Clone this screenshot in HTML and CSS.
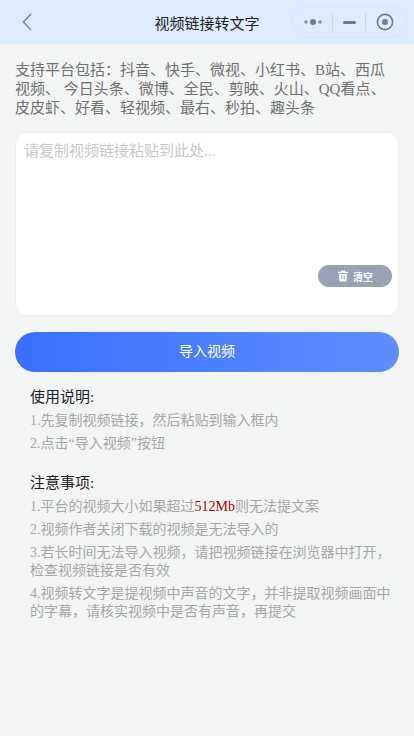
FILE: index.html
```html
<!DOCTYPE html>
<html lang="zh">
<head>
  <meta charset="UTF-8" />
  <meta name="viewport" content="width=device-width, initial-scale=1.0" />
  <title>视频链接转文字</title>
  <link rel="stylesheet" href="styles.css">
</head>
<body>
  <div class="header">
    <svg class="back-icon" width="12" height="18" viewBox="0 0 12 18">
      <path d="M10 1 L2.5 9 L10 17" fill="none" stroke="#7c8794" stroke-width="1.6" />
    </svg>
    <div class="header-title">视频链接转文字</div>
    <div class="capsule">
      <svg width="18" height="8" viewBox="0 0 18 8">
        <circle cx="2" cy="4" r="1.8" fill="#8d929b" />
        <circle cx="9" cy="4" r="3" fill="#767b85" />
        <circle cx="16" cy="4" r="1.8" fill="#8d929b" />
      </svg>
      <span class="capsule-line"></span>
      <span class="capsule-dash"></span>
      <span class="capsule-line"></span>
      <svg width="18" height="18" viewBox="0 0 18 18">
        <circle cx="9" cy="9" r="7.6" fill="none" stroke="#767b85" stroke-width="1.6" />
        <circle cx="9" cy="9" r="3" fill="#767b85" />
      </svg>
    </div>
  </div>

  <p class="platforms">支持平台包括：抖音、快手、微视、小红书、B站、西瓜视频、 今日头条、微博、全民、剪映、火山、QQ看点、皮皮虾、好看、轻视频、最右、秒拍、趣头条</p>

  <div class="input-card">
    <div class="placeholder">请复制视频链接粘贴到此处...</div>
    <div class="clear-btn">
      <svg width="12" height="12" viewBox="0 0 12 12">
        <path d="M4.3 0.6 H7.7 L8.2 1.8 H11 V3 H1 V1.8 H3.8 Z" fill="#fff" />
        <path d="M1.9 3.8 H10.1 L9.5 11.4 H2.5 Z" fill="#fff" />
        <path d="M4.8 5.4 V9.4 M7.2 5.4 V9.4" stroke="#9aa1b4" stroke-width="0.9" />
      </svg>
      <span>清空</span>
    </div>
  </div>

  <div class="import-btn">导入视频</div>

  <div class="notes">
    <h3>使用说明:</h3>
    <p>1.先复制视频链接，然后粘贴到输入框内</p>
    <p>2.点击“导入视频”按钮</p>
    <h3 class="second">注意事项:</h3>
    <p>1.平台的视频大小如果超过<span class="limit">512Mb</span>则无法提文案</p>
    <p>2.视频作者关闭下载的视频是无法导入的</p>
    <p>3.若长时间无法导入视频，请把视频链接在浏览器中打开，检查视频链接是否有效</p>
    <p>4.视频转文字是提视频中声音的文字，并非提取视频画面中的字幕，请核实视频中是否有声音，再提交</p>
  </div>
</body>
</html>
```

FILE: styles.css
```css
body {
  font-family: "Liberation Serif", "Noto Sans CJK SC", serif;
  background-color: #f3f5f5;
  margin: 0;
  color: #666;
}

.header {
  position: relative;
  display: flex;
  align-items: center;
  justify-content: center;
  height: 44px;
  background-color: #dcebfd;
}

.back-icon {
  position: absolute;
  left: 21px;
  top: 13px;
}

.header-title {
  font-size: 15px;
  color: #222;
}

.capsule {
  position: absolute;
  right: 7px;
  top: 6px;
  width: 115px;
  height: 32px;
  box-sizing: border-box;
  display: flex;
  align-items: center;
  justify-content: space-between;
  padding: 0 12px 0 11px;
  border: 1px solid #d6e5f8;
  border-radius: 16px;
}

.capsule-line {
  width: 1px;
  height: 18px;
  background-color: #c9d5e3;
}

.capsule-dash {
  width: 13px;
  height: 3px;
  border-radius: 2px;
  background-color: #767b85;
}

.platforms {
  margin: 17px 15px 14px;
  font-size: 15px;
  line-height: 19px;
  color: #707070;
}

.input-card {
  position: relative;
  height: 184px;
  box-sizing: border-box;
  margin: 0 15px;
  padding: 9px 8px;
  background-color: #fff;
  border: 1px solid #ececec;
  border-radius: 12px;
}

.placeholder {
  font-size: 15px;
  line-height: 19px;
  color: #c8c8c8;
}

.clear-btn {
  position: absolute;
  right: 6px;
  bottom: 28px;
  display: flex;
  align-items: center;
  justify-content: center;
  gap: 4px;
  width: 74px;
  height: 22px;
  border-radius: 11px;
  background-color: #9aa1b4;
  color: #fff;
  font-size: 10px;
  font-weight: bold;
}

.import-btn {
  height: 40px;
  margin: 16px 15px 0;
  border-radius: 20px;
  background: linear-gradient(90deg, #3a70fe, #5d8dfd);
  color: #fff;
  font-size: 14px;
  line-height: 40px;
  text-align: center;
}

.notes {
  margin: 0 20px 0 30px;
  padding-top: 15px;
}

.notes h3 {
  margin: 0 0 1px;
  font-size: 15px;
  font-weight: normal;
  line-height: 20px;
  color: #222;
}

.notes h3.second {
  margin: 20px 0 2px;
}

.notes p {
  margin: 5px 0 0;
  font-size: 14px;
  line-height: 18px;
  color: #a6a6a6;
}

.limit {
  color: #a50000;
}
```
